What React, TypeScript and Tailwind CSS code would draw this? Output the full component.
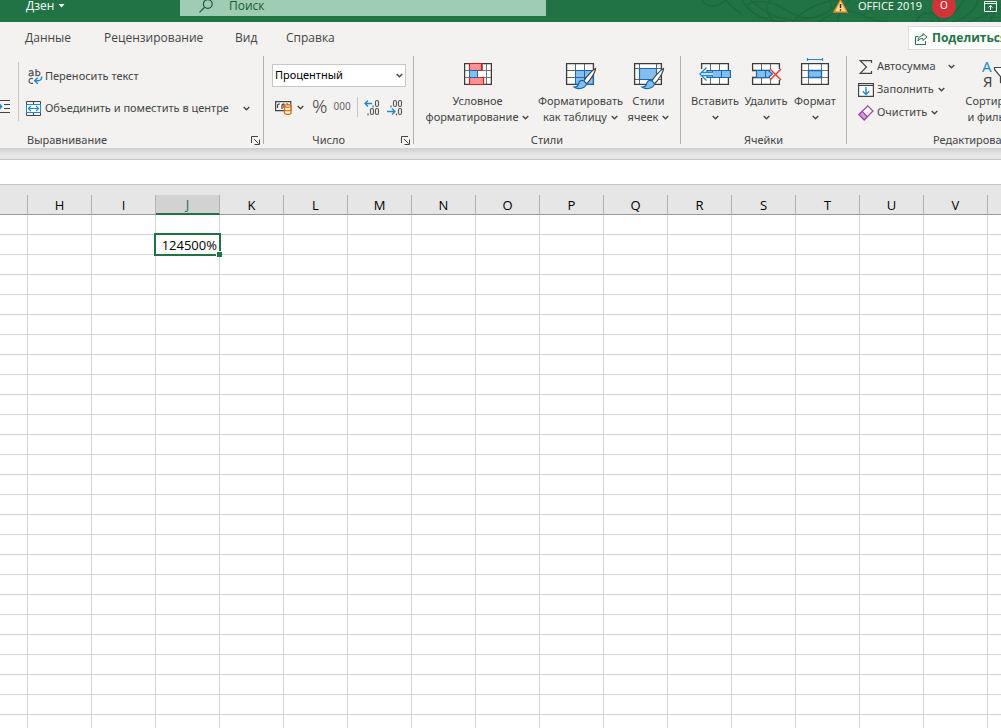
import React from "react";

type ChildrenProps = { children?: React.ReactNode };

const COLUMNS = ["", "H", "I", "J", "K", "L", "M", "N", "O", "P", "Q", "R", "S", "T", "U", "V", ""];
const ROWS = Array.from({ length: 26 }, (_, i) => i + 1);
const ACTIVE_COLUMN = "J";
const ACTIVE_ROW = 2;

function Chevron({ className = "" }: { className?: string }) {
  return (
    <svg className={`shrink-0 ${className}`} width="7" height="5" viewBox="0 0 7 5" fill="none" stroke="#444" strokeWidth="1.4">
      <path d="M.7 1 3.5 3.7 6.3 1" />
    </svg>
  );
}

function Launcher() {
  return (
    <button type="button" aria-label="Параметры" className="text-[#444]">
      <svg width="9" height="9" viewBox="0 0 9 9" fill="none" stroke="currentColor">
        <path d="M.5 7V.5H7M3 3l4.5 4.5M8.5 3.5v5h-5" />
      </svg>
    </button>
  );
}

function Separator() {
  return <div className="my-1 w-px shrink-0 bg-[#b3b0ad]" />;
}

function HeaderPattern() {
  return (
    <svg className="absolute right-0 top-0" width="301" height="22" viewBox="0 0 301 22" fill="none" stroke="#1d683e" strokeWidth="1.6">
      <path d="M2 0c4 8 16 8 24 0M26 0c4 5 8 10 15 13" />
      <path d="M42 0c8 14 24 22 44 22M50 0c10 8 26 22 50 20s34-12 40-20M44 6c14-8 30-4 42 4s22 10 34 6 14-12 8-16M70 0c-6 8-4 16 6 22M92 22c12-12 30-22 52-22M150 0c-8 8-14 18-12 22M120 22c10-10 28-14 40-8s20 8 28 8" />
      <path d="M216 22c4-10 18-12 22-4s-6 8-6 2M240 22c10-4 20-14 24-22M252 22c12-2 24-12 26-22M268 22c10-4 24-8 33-18M290 22c2-8 6-12 11-14" />
    </svg>
  );
}

function WrapTextIcon() {
  return (
    <svg width="15" height="17" viewBox="0 0 15 17" fill="none" strokeWidth="1.2">
      <g stroke="#555">
        <path d="M1 3.2c2.6-1.2 4-.4 4 1V8M5 5.2c-3-.2-4 .4-4 1.5 0 1.6 3.2 1.6 4-.2M8 1v7M8 4.6c1-1.8 4-1.4 4 1s-3 2.8-4 1M5 10.7c-2.2-.9-4 .2-4 2.2s1.8 3.1 4 2.2" />
      </g>
      <path d="M13.5 8.5c.6 2.5-1 4.3-3.5 4.3H7M9.7 9.8l-3 3 3 3" stroke="#2488d0" strokeWidth="1.5" />
    </svg>
  );
}

function MergeIcon() {
  return (
    <svg width="15" height="15" viewBox="0 0 15 15" fill="none">
      <path d="M.5.5h14v14H.5zM7.5 0v3M7.5 12v3M0 3.5h15M0 11.5h15" stroke="#444" />
      <path d="M.5 3.5h14v8H.5z" fill="#fff" stroke="#2488d0" />
      <path d="M2.5 7.5h10M5 5 2.5 7.5 5 10M10 5l2.5 2.5L10 10" stroke="#2488d0" strokeWidth="1.2" />
    </svg>
  );
}

function IndentIcon() {
  return (
    <svg width="10" height="14" viewBox="0 0 10 14" fill="none">
      <path d="M0 1.5h10M4 5.5h6M4 9.5h6M0 13.5h10" stroke="#444" />
      <path d="M0 4.5 2.5 7.5 0 10.5z" fill="#2488d0" />
    </svg>
  );
}

function CurrencyIcon() {
  return (
    <svg width="17" height="15" viewBox="0 0 17 15" fill="none">
      <path d="M.6 1.6h15.2v9H.6z" fill="#fafafa" stroke="#444" strokeWidth="1.2" />
      <path d="M5 4H3.5L2.5 5v3M7 9V5l1-1h1v4M11 4h2" stroke="#444" strokeWidth="1.2" />
      <path d="M9.5 6c0-1.7 6.5-1.7 6.5 0v7c0 1.8-6.5 1.8-6.5 0z" fill="#fff" stroke="#e36c0a" strokeWidth="1.4" />
      <path d="M9.5 6c0 1.7 6.5 1.7 6.5 0M9.5 9.5c0 1.7 6.5 1.7 6.5 0" stroke="#e36c0a" strokeWidth="1.3" />
    </svg>
  );
}

function DecimalIcon({ increase }: { increase: boolean }) {
  return (
    <svg width="17" height="17" viewBox="0 0 17 17" fill="none">
      <g stroke="#555" strokeWidth="1.1">
        {increase ? (
          <>
            <path d="M9 6.5v2" />
            <rect x="11.5" y="1.5" width="3" height="6" rx="1.5" />
            <path d="M4 14.5v2" />
            <rect x="6.5" y="9.5" width="3" height="6" rx="1.5" />
            <rect x="11.5" y="9.5" width="3" height="6" rx="1.5" />
          </>
        ) : (
          <>
            <path d="M4 6.5v2" />
            <rect x="6.5" y="1.5" width="3" height="6" rx="1.5" />
            <rect x="11.5" y="1.5" width="3" height="6" rx="1.5" />
            <path d="M9.5 14.5v2" />
            <rect x="11.5" y="9.5" width="3" height="6" rx="1.5" />
          </>
        )}
      </g>
      <path
        d={increase ? "M8 4.5H1M4 1.5l-3 3 3 3" : "M0 12.5h8M5 9.5l3 3-3 3"}
        stroke="#2488d0"
        strokeWidth="1.4"
      />
    </svg>
  );
}

function Brush() {
  return (
    <g>
      <path d="M30.5 8.5c-3 1.5-9 8-12 13l3 2.5c4-4 9-12 9-15.5z" fill="#fff" stroke="#444" strokeWidth="1.2" />
      <path d="M18.5 20.500c-3-.5-4.500 1.500-5 3.500s-2 3-4.500 3c4 3 12 1.500 12.500-3.500z" fill="#83beec" stroke="#1668b3" strokeWidth="1.2" />
    </g>
  );
}

function ConditionalIcon() {
  return (
    <svg width="28" height="32" viewBox="0 0 28 32" fill="none">
      <path d="M.6 3.6h26.8v20.8H.6z" fill="#fff" />
      <path d="M5.5 3v21M22.5 3v21M18.5 3v8M0 10.5h28M0 17.5h28" stroke="#777" />
      <path d="M.6 3.6h26.8v20.8H.6z" stroke="#3b3b3b" strokeWidth="1.3" />
      <path d="M5.5 3.5h12v7h-12zM5.5 17.5h14v7h-14z" fill="#ff9095" stroke="#d6201c" strokeWidth="1.2" />
      <path d="M5.5 10.5h8v7h-8z" fill="#83beec" stroke="#1668b3" />
    </svg>
  );
}

function FormatTableIcon() {
  return (
    <svg width="32" height="32" viewBox="0 0 32 32" fill="none">
      <path d="M1.6 3.6h26.8v20.8H1.6z" fill="#fff" />
      <path d="M10 10h19v15H10z" fill="#83beec" />
      <path d="M10.5 3v22M19.5 3v8M1 10.5h9M1 17.5h9" stroke="#666" />
      <path d="M1.6 3.6h26.8v20.8H1.6z" stroke="#3b3b3b" strokeWidth="1.3" />
      <path d="M28.5 10.5h-18v14h18zM19.5 10.5v14M10.5 17.5h18" stroke="#1668b3" />
      <Brush />
    </svg>
  );
}

function CellStylesIcon() {
  return (
    <svg width="32" height="32" viewBox="0 0 32 32" fill="none">
      <path d="M1.6 3.6h26.8v20.8H1.6z" fill="#fff" />
      <path d="M6.5 3v22M23.5 3v6M1 8.5h28M1 19.5h28" stroke="#666" />
      <path d="M1.6 3.6h26.8v20.8H1.6z" stroke="#3b3b3b" strokeWidth="1.3" />
      <path d="M6.5 8.5h17v11h-17z" fill="#83beec" stroke="#1668b3" strokeWidth="1.2" />
      <Brush />
    </svg>
  );
}

function InsertIcon() {
  return (
    <svg width="32" height="32" viewBox="0 0 32 32" fill="none">
      <path d="M2.6 3.6h26.8v20.8H2.6z" fill="#fff" />
      <path d="M11.5 3v22M20.5 3v22" stroke="#666" />
      <path d="M2.6 9V3.6h26.8v20.8H2.6V18" stroke="#3b3b3b" strokeWidth="1.3" />
      <path d="M8 10.5h23.5v7H8z" fill="#83beec" stroke="#1668b3" strokeWidth="1.2" />
      <path d="M13.5 10v8M22.5 10v8" stroke="#1668b3" />
      <path d="M1 12.5h13v3H1z" fill="#fff" />
      <path d="M14 12.5H3M14 15.5H3M7.5 7.5.9 14l6.6 6.5" stroke="#2488d0" strokeWidth="1.4" />
    </svg>
  );
}

function DeleteIcon() {
  return (
    <svg width="32" height="32" viewBox="0 0 32 32" fill="none">
      <path d="M2.6 3.6h26.8v20.8H2.6z" fill="#fff" />
      <path d="M0 11h5.5v6H0zM24 10h8v9h-8z" fill="#f3f2f1" />
      <path d="M11.5 3v7M20.5 3v7M11.5 18v7M20.5 18v7" stroke="#666" />
      <path d="M2.6 10.500V3.600h26.800V9M29.400 20v4.400H2.600V17.500M2 10.500h18M2 17.500h18" stroke="#3b3b3b" strokeWidth="1.3" />
      <path d="M6.5 10.5h12l4 3.5-4 3.5h-12z" fill="#83beec" stroke="#1668b3" strokeWidth="1.2" />
      <path d="M15.5 10v8" stroke="#1668b3" />
      <path d="m20 9 11 11M31 9 20 20" stroke="#e8403c" strokeWidth="1.5" />
    </svg>
  );
}

function FormatIcon() {
  return (
    <svg className="overflow-visible" width="32" height="32" viewBox="0 0 32 32" fill="none">
      <path d="M8.5-.5h15M8.5-2v3M23.5-2v3" stroke="#2488d0" strokeWidth="1.2" />
      <path d="M2.6 3.6h26.8v20.8H2.6z" fill="#fff" />
      <path d="M9.5 3v22M22.5 3v22M2 10.5h28M2 17.5h28" stroke="#777" />
      <path d="M2.6 3.6h26.8v20.8H2.6z" stroke="#3b3b3b" strokeWidth="1.3" />
      <path d="M9.5 10.5h13v7h-13z" fill="#83beec" stroke="#1668b3" strokeWidth="1.3" />
    </svg>
  );
}

function SortFilterIcon() {
  return (
    <svg width="30" height="32" viewBox="0 0 30 32" fill="none">
      <text x="0" y="12" fontSize="15" fill="#2488d0">А</text>
      <text x="1" y="27" fontSize="15" fill="#444">Я</text>
      <path d="M12.5 7.5h15v2l-6 7v8l-3-2v-6l-6-7z" fill="#fff" stroke="#444" strokeWidth="1.2" />
    </svg>
  );
}

function SumIcon() {
  return (
    <svg width="16" height="16" viewBox="0 0 16 16" fill="none" stroke="#444" strokeWidth="1.2">
      <path d="M13.5 4V1.6H2.2L8.5 8l-6.3 6.4h11.3V12" />
    </svg>
  );
}

function FillIcon() {
  return (
    <svg width="16" height="16" viewBox="0 0 16 16" fill="none">
      <path d="M.6 1.6h14.8v12.8H.6z" fill="#fff" stroke="#444" strokeWidth="1.2" />
      <path d="M0 3.5h16" stroke="#444" />
      <path d="M8 5v7.5M4.8 9.3 8 12.5l3.2-3.2" stroke="#2488d0" strokeWidth="1.4" />
    </svg>
  );
}

function EraserIcon() {
  return (
    <svg width="16" height="16" viewBox="0 0 16 16" strokeWidth="1.2" stroke="#9b3fa5">
      <path d="M9.8.8 15 6l-8.8 8.8L1 9.6z" fill="#fff" />
      <path d="m4.2 6.400 5.200 5.200-3.200 3.200L1 9.600z" fill="#d59bdb" />
    </svg>
  );
}

function TitleBar() {
  return (
    <header className="relative h-[22px] shrink-0 overflow-hidden bg-[#217346] text-white">
      <HeaderPattern />
      <div className="relative -mt-[10px] flex h-8 items-center">
        <div className="flex w-[180px] items-center gap-1 pl-[26px]">
          <span>Дзен</span>
          <svg width="7" height="4" viewBox="0 0 7 4" fill="currentColor">
            <path d="M.5 0h6l-3 3.5z" />
          </svg>
        </div>
        <label className="flex h-5 w-[366px] items-center gap-4 bg-[#9fcdb3] pl-[19px]">
          <svg className="shrink-0" width="14" height="14" viewBox="0 0 14 14" fill="none" stroke="#185c37" strokeWidth="1.2">
            <circle cx="8.8" cy="5" r="4.4" />
            <path d="M5.6 8.3.4 13.4" />
          </svg>
          <input
            type="text"
            placeholder="Поиск"
            aria-label="Поиск"
            className="w-full bg-transparent outline-none placeholder:text-[#185c37]"
          />
        </label>
        <div className="ml-auto flex items-center">
          <svg width="15" height="14" viewBox="0 0 15 14">
            <path d="M7.5 1 14 13H1z" fill="#fbd98d" stroke="#e38b22" strokeWidth="1.3" />
            <path d="M7.5 5v4M7.5 10.2v1.5" stroke="#222" strokeWidth="1.4" />
          </svg>
          <span className="ml-2.5 text-[11px]">OFFICE 2019</span>
          <span className="ml-2.5 flex size-6 items-center justify-center rounded-full bg-[#d13438] text-[10px]">О</span>
          <button type="button" aria-label="Параметры отображения ленты" className="ml-7 mr-1">
            <svg width="13" height="11" viewBox="0 0 13 11" fill="none" stroke="currentColor">
              <path d="M.5.5h12v10H.5zM.5 2.5h12M6.5 9V4.5M4.5 6.5l2-2 2 2" />
            </svg>
          </button>
        </div>
      </div>
    </header>
  );
}

function Tabs() {
  return (
    <nav className="flex h-[30px] shrink-0 items-center overflow-hidden pl-[25px] pt-0.5">
      <a href="#data" className="w-[79px]">Данные</a>
      <a href="#review" className="w-[131px]">Рецензирование</a>
      <a href="#view" className="w-[51px]">Вид</a>
      <a href="#help">Справка</a>
      <button
        type="button"
        className="ml-auto flex h-6 w-[93px] items-center gap-1 whitespace-nowrap border border-r-0 border-[#dedcda] bg-white pl-1.5 font-bold text-[#217346]"
      >
        <svg className="shrink-0" width="13" height="13" viewBox="0 0 13 13" fill="none" stroke="currentColor">
          <path d="M3.5 4.5h-3v8h10V9M8 1.5 12 5 8 8.5v-2c-2.5 0-4 .5-5 2.5 0-3.5 2-5.3 5-5.5z" />
        </svg>
        Поделиться
      </button>
    </nav>
  );
}

function GroupLabel({ children }: ChildrenProps) {
  return <div className="flex h-4 items-center justify-center">{children}</div>;
}

function BigButton({ icon, lines, className }: { icon: React.ReactNode; lines: [string, string]; className: string }) {
  return (
    <button type="button" className={`flex shrink-0 flex-col items-center whitespace-nowrap leading-4 ${className}`}>
      {icon}
      <span className="mt-px">{lines[0]}</span>
      <span className="flex h-4 items-center gap-1">
        {lines[1]}
        <Chevron />
      </span>
    </button>
  );
}

function SmallButton({ icon, label, gap = "ml-1" }: { icon: React.ReactNode; label: string; gap?: string }) {
  return (
    <button type="button" className="flex h-[23px] items-center whitespace-nowrap">
      {icon}
      <span className="ml-[3px]">{label}</span>
      <Chevron className={gap} />
    </button>
  );
}

function AlignmentGroup() {
  return (
    <section className="flex w-[263px] shrink-0 flex-col">
      <div className="flex h-20">
        <button type="button" aria-label="Увеличить отступ" className="mt-8 h-11">
          <IndentIcon />
        </button>
        <div className="ml-2 mt-2.5 h-[59px] w-px bg-[#c8c6c4]" />
        <div className="ml-[7px] flex flex-col gap-2 pt-3">
          <button type="button" className="flex h-6 items-center gap-0.5 pl-0.5">
            <WrapTextIcon />
            Переносить текст
          </button>
          <button type="button" className="flex h-6 items-center gap-1 whitespace-nowrap">
            <MergeIcon />
            Объединить и поместить в центре
            <Chevron className="ml-2.5" />
          </button>
        </div>
      </div>
      <div className="flex h-4 items-center justify-between pl-[27px] pr-[3px]">
        Выравнивание
        <Launcher />
      </div>
    </section>
  );
}

function NumberGroup() {
  return (
    <section className="flex w-[149px] shrink-0 flex-col">
      <div className="h-20 pl-2 pt-3">
        <div className="relative w-[134px]">
          <select
            aria-label="Числовой формат"
            className="h-[23px] w-full appearance-none border border-[#c8c6c4] bg-white pl-0.5 text-black"
          >
            <option>Процентный</option>
            <option>Числовой</option>
            <option>Денежный</option>
          </select>
          <Chevron className="pointer-events-none absolute right-[3px] top-[9px]" />
        </div>
        <div className="mt-2 flex h-6 items-center pl-[3px]">
          <button type="button" aria-label="Финансовый формат" className="flex items-center gap-[5px]">
            <CurrencyIcon />
            <Chevron />
          </button>
          <button type="button" className="ml-2 text-[19px] font-light">%</button>
          <button type="button" className="ml-1.5 text-[10px] text-[#666]">000</button>
          <div className="ml-1.5 h-5 w-px bg-[#c8c6c4]" />
          <button type="button" aria-label="Увеличить разрядность" className="ml-1.5">
            <DecimalIcon increase />
          </button>
          <button type="button" aria-label="Уменьшить разрядность" className="ml-1.5">
            <DecimalIcon increase={false} />
          </button>
        </div>
      </div>
      <div className="flex h-4 items-center justify-end gap-14 pr-[3px]">
        Число
        <Launcher />
      </div>
    </section>
  );
}

function Ribbon() {
  return (
    <div className="flex h-24 shrink-0 overflow-hidden font-['Noto_Sans','Open_Sans',sans-serif] text-[11px]">
      <AlignmentGroup />
      <Separator />
      <NumberGroup />
      <Separator />

      <section className="flex w-[266px] shrink-0 flex-col">
        <div className="flex h-20 gap-1 pl-2 pt-2">
          <BigButton className="w-[111px]" icon={<ConditionalIcon />} lines={["Условное", "форматирование"]} />
          <BigButton className="w-[87px]" icon={<FormatTableIcon />} lines={["Форматировать", "как таблицу"]} />
          <BigButton className="w-[41px]" icon={<CellStylesIcon />} lines={["Стили", "ячеек"]} />
        </div>
        <GroupLabel>Стили</GroupLabel>
      </section>
      <Separator />

      <section className="flex w-[165px] shrink-0 flex-col">
        <div className="flex h-20 gap-[5px] pl-2.5 pt-2">
          <BigButton className="w-12" icon={<InsertIcon />} lines={["Вставить", ""]} />
          <BigButton className="w-11" icon={<DeleteIcon />} lines={["Удалить", ""]} />
          <BigButton className="w-11" icon={<FormatIcon />} lines={["Формат", ""]} />
        </div>
        <GroupLabel>Ячейки</GroupLabel>
      </section>
      <Separator />

      <section className="flex w-60 shrink-0 flex-col">
        <div className="flex h-20 pl-[11px]">
          <div className="flex w-[102px] flex-col items-start pt-[3px]">
            <SmallButton icon={<SumIcon />} label="Автосумма" gap="ml-3" />
            <SmallButton icon={<FillIcon />} label="Заполнить" />
            <SmallButton icon={<EraserIcon />} label="Очистить" />
          </div>
          <div className="pl-1 pt-2">
            <BigButton className="w-[66px]" icon={<SortFilterIcon />} lines={["Сортировка", "и фильтр"]} />
          </div>
        </div>
        <div className="flex h-4 items-center pl-[86px]">Редактирование</div>
      </section>
    </div>
  );
}

function Sheet() {
  return (
    <table className="w-full table-fixed border-separate border-spacing-0 text-[13px] leading-4 text-black">
      <colgroup>
        {COLUMNS.map((_, i) => (
          <col key={i} className={i === 0 ? "w-7" : i === COLUMNS.length - 1 ? "" : "w-16"} />
        ))}
      </colgroup>
      <thead>
        <tr className="h-5">
          {COLUMNS.map((name, i) => (
            <th
              key={i}
              scope="col"
              className={
                name === ACTIVE_COLUMN
                  ? "border-b-2 border-r border-b-[#217346] border-r-[#b1b1b1] bg-[#d2d2d2] p-0 font-normal text-[#217346]"
                  : "border-b border-r border-b-[#999] border-r-[#b1b1b1] bg-[#e6e6e6] p-0 pt-px font-normal last:border-r-0"
              }
            >
              {name}
            </th>
          ))}
        </tr>
      </thead>
      <tbody>
        {ROWS.map((row) => (
          <tr key={row} className="h-5">
            {COLUMNS.map((name, i) => (
              <td key={i} className="relative border-b border-r border-[#d4d4d4] bg-white p-0 last:border-r-0">
                {name === ACTIVE_COLUMN && row === ACTIVE_ROW && (
                  <div className="absolute -bottom-0.5 -left-0.5 -right-0.5 -top-0.5 z-10 flex items-center justify-end border-2 border-[#217346] bg-white pr-0.5">
                    124500%
                    <span className="absolute -bottom-[3px] -right-[3px] size-1.5 border-l border-t border-white bg-[#217346]" />
                  </div>
                )}
              </td>
            ))}
          </tr>
        ))}
      </tbody>
    </table>
  );
}

export default function App() {
  return (
    <div className="flex h-screen flex-col overflow-hidden bg-[#f3f2f1] font-['Open_Sans','Noto_Sans',sans-serif] text-xs text-[#444]">
      <TitleBar />
      <Tabs />
      <Ribbon />
      <div className="h-3 shrink-0 border-b border-[#c6c6c6] bg-linear-to-b from-[#d0cecd] to-[#e6e6e6] to-60%" />
      <input
        type="text"
        aria-label="Строка формул"
        className="h-[25px] w-full shrink-0 border-b border-[#c6c6c6] bg-white px-2 outline-none"
      />
      <main className="min-h-0 flex-1 overflow-hidden bg-[#e6e6e6] pt-2.5">
        <Sheet />
      </main>
    </div>
  );
}
